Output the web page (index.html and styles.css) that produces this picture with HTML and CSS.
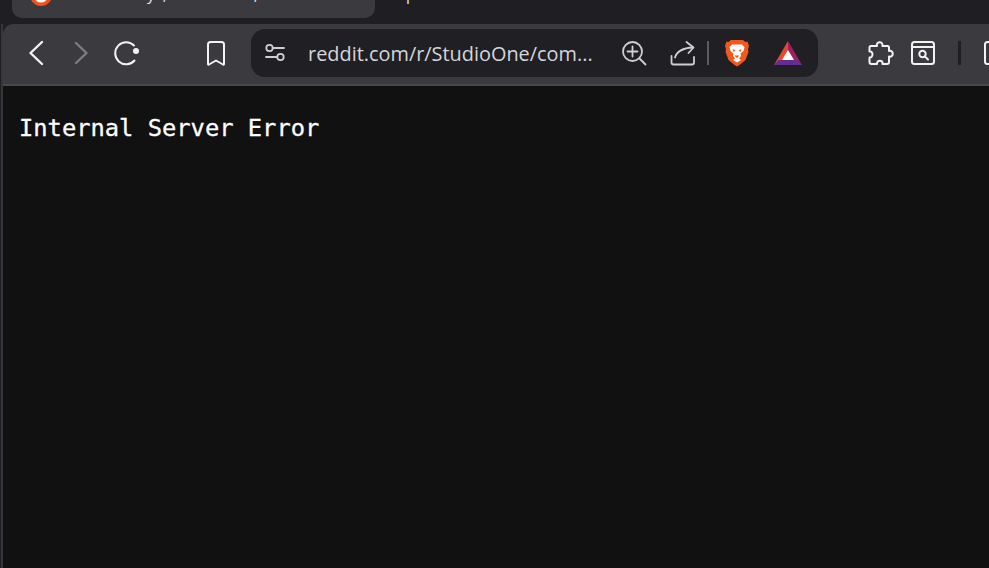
FILE: index.html
```html
<!DOCTYPE html>
<html lang="en">
<head>
    <meta charset="UTF-8">
    <meta name="viewport" content="width=device-width, initial-scale=1.0">
    <title>Internal Server Error</title>
    <link rel="stylesheet" href="styles.css">
</head>
<body>
    <div class="tabstrip">
        <div class="tab">
            <svg class="tab-icon" viewBox="0 0 22 22">
                <circle cx="11" cy="11" r="11" fill="#f4501e"/>
                <ellipse cx="11" cy="14" rx="6" ry="4.5" fill="#fff"/>
            </svg>
            <span class="tab-title">y</span>
            <span class="tab-title comma-one">,</span>
            <span class="tab-title comma-two">,</span>
        </div>
        <span class="tab-title next-tab">p</span>
    </div>

    <div class="frame">
        <div class="toolbar">
            <div class="nav">
                <svg class="icon heavy" viewBox="0 0 28 28"><path d="M20 3 L8.500 14 L20 25"/></svg>
                <svg class="icon heavy dim" viewBox="0 0 28 28"><path d="M9 4 L19.500 14 L9 24"/></svg>
                <svg class="icon" viewBox="0 0 28 28">
                    <path d="M22.500 21.500 A11 11 0 1 1 22 6.500"/>
                    <circle class="solid" cx="24" cy="12" r="3"/>
                </svg>
                <svg class="icon bookmark" viewBox="0 0 28 28"><path d="M6 5.500 Q6 3 8.500 3 H19.500 Q22 3 22 5.500 V25 Q22 26 21 25.500 L14 21.500 L7 25.500 Q6 26 6 25 Z"/></svg>
            </div>

            <div class="address">
                <svg class="icon thin small" viewBox="0 0 24 24">
                    <circle cx="6.500" cy="7" r="3.200"/>
                    <path d="M10 7 H21"/>
                    <circle cx="17.500" cy="16" r="3.200"/>
                    <path d="M3 16 H14"/>
                </svg>
                <span class="url">reddit.com/r/StudioOne/com...</span>
                <svg class="icon thin" viewBox="0 0 28 28">
                    <circle cx="12.500" cy="12.500" r="9.500"/>
                    <path d="M12.500 7.500 V17.500 M7.500 12.500 H17.500 M19.500 19.500 L25.500 25.500"/>
                </svg>
                <svg class="icon thin share" viewBox="0 0 28 28">
                    <path d="M25 18 V23.500 Q25 25.500 23 25.500 H4.500 Q2.500 25.500 2.500 23.500 V17"/>
                    <path d="M6 18.500 C8 12 14 9 24 8.500"/>
                    <path d="M17.500 3 L24.500 8.500 L19.500 14"/>
                </svg>
                <span class="divider"></span>
                <svg class="brave" viewBox="0 0 24 28">
                    <path fill="#f0591a" d="M6 1 H18 L20.500 3 L22.500 2.500 L24 7 L23 10.500 L23.500 13 L20.500 21 L14.500 26 L12 27.500 L9.500 26 L3.500 21 L0.500 13 L1 10.500 L0 7 L1.500 2.500 L3.500 3 Z"/>
                    <path fill="#fff" d="M7 5.500 H17 L19.500 8 L18.500 12 L15.500 14.500 L16 17 L14 19.500 L16 21 L12 23.500 L8 21 L10 19.500 L8 17 L8.500 14.500 L5.500 12 L4.500 8 Z"/>
                    <path fill="#f0591a" d="M7.500 10 L10.500 11.500 L8.500 13 Z M16.500 10 L13.500 11.500 L15.500 13 Z M9.500 16.500 H14.500 L12 19 Z"/>
                </svg>
                <svg class="bat" viewBox="0 0 28 24">
                    <polygon fill="#e8482e" points="14,0 0,24 14,16"/>
                    <polygon fill="#9e1f63" points="14,0 28,24 14,16"/>
                    <polygon fill="#662d91" points="0,24 28,24 23.500,19 4.500,19"/>
                    <polygon fill="#fff" points="14,9 8,19 20,19"/>
                </svg>
            </div>

            <div class="extras">
                <svg class="icon" viewBox="0 0 28 28"><path d="M11 7 C9.500 3 17 1 16.500 7 H21.500 Q23 7 23 8.500 V12 C28 10.500 28 19 23 17.500 V23 Q23 25 21 25 H16.500 C17.500 20.500 10.500 20.500 11 25 H5.500 Q3.500 25 3.500 23 V18.500 C7.500 19 7.500 11.500 3.500 12.500 V8.500 Q3.500 7 5 7 Z"/></svg>
                <svg class="icon" viewBox="0 0 28 28">
                    <rect x="3" y="3" width="22" height="22" rx="2.500"/>
                    <path d="M3 8 H25"/>
                    <circle cx="13.500" cy="15" r="3.200"/>
                    <path d="M16 17.500 L19 20.500"/>
                </svg>
                <span class="divider dark"></span>
                <svg class="icon last" viewBox="0 0 28 28"><rect x="2" y="3" width="24" height="22" rx="2.500"/></svg>
            </div>
        </div>

        <pre class="page">Internal Server Error</pre>
    </div>
</body>
</html>
```

FILE: styles.css
```css
*{
    box-sizing: border-box;
}
html, body{
    height: 100%;
}
body{
    margin: 0;
    overflow: hidden;
    background-color: #1e1e23;
    display: flex;
    flex-direction: column;
}

/* top strip, cut off by the screenshot */
.tabstrip{
    height: 24px;
    flex-shrink: 0;
    padding-left: 12px;
    display: flex;
    align-items: flex-start;
    overflow: hidden;
}
.tab{
    width: 363px;
    height: 18px;
    flex-shrink: 0;
    padding-left: 18px;
    background-color: #3a3a3f;
    border-radius: 0 0 10px 10px;
    display: flex;
    align-items: flex-start;
    overflow: hidden;
}
.tab-icon{
    width: 22px;
    height: 22px;
    flex-shrink: 0;
    margin-top: -16px;
}
.tab-title{
    font-family: "Noto Sans", sans-serif;
    font-size: 15px;
    line-height: 15px;
    color: #e6e6e6;
    margin-top: -13px;
    margin-left: 95px;
}
.comma-one{
    margin-left: 8px;
}
.comma-two{
    margin-left: 87px;
}
.next-tab{
    margin-left: 31px;
}

/* thin grey rail on the left of the window */
.frame{
    flex: 1;
    margin-left: 1px;
    border-left: 2px solid #36363b;
    display: flex;
    flex-direction: column;
    min-height: 0;
}

/* toolbar */
.toolbar{
    height: 62px;
    flex-shrink: 0;
    padding: 6px 0 8px 19px;
    background-color: #3a3a3f;
    border-top-left-radius: 10px;
    border-bottom: 2px solid #48484d;
    display: flex;
    align-items: center;
    overflow: hidden;
}
.nav{
    display: flex;
    align-items: center;
    gap: 17px;
}
.icon{
    width: 28px;
    height: 28px;
    flex-shrink: 0;
    fill: none;
    stroke: #f2f2f2;
    stroke-width: 2;
    stroke-linecap: round;
    stroke-linejoin: round;
}
.icon .solid{
    fill: #f2f2f2;
    stroke: none;
}
.heavy{
    stroke-width: 2.400;
}
.icon.dim{
    stroke: #7d7d80;
}
.bookmark{
    margin-left: 45px;
}
.icon.thin{
    stroke: #cfcfd2;
    stroke-width: 1.800;
}
.icon.small{
    width: 24px;
    height: 24px;
}

/* address bar */
.address{
    width: 567px;
    height: 48px;
    margin-left: 21px;
    padding-left: 12px;
    flex-shrink: 0;
    background-color: #1f1f24;
    border-radius: 14px;
    display: flex;
    align-items: center;
}
.url{
    flex: 1;
    margin-left: 21px;
    font-family: "Open Sans", "Noto Sans", sans-serif;
    font-size: 19.900px;
    color: #d6d6d9;
    white-space: nowrap;
}
.share{
    margin-left: 21px;
}
.divider{
    width: 2px;
    height: 24px;
    margin-left: 10px;
    flex-shrink: 0;
    background-color: #5c5c60;
}
.brave{
    width: 24px;
    height: 28px;
    margin-left: 16px;
    flex-shrink: 0;
}
.bat{
    width: 28px;
    height: 24px;
    margin-left: 25px;
    margin-right: 16px;
    flex-shrink: 0;
}

.extras{
    margin-left: 48px;
    display: flex;
    align-items: center;
    gap: 15px;
}
.divider.dark{
    width: 3px;
    margin-left: 6px;
    background-color: #1f1f24;
}
.last{
    margin-left: 7px;
}

/* error text */
.page{
    flex: 1;
    margin: 0;
    padding: 27px 0 0 16px;
    background-color: #111112;
    font-family: "DejaVu Sans Mono", monospace;
    font-size: 23.750px;
    line-height: 30px;
    color: #ffffff;
    -webkit-text-stroke: 0.3px #ffffff;
}
```
